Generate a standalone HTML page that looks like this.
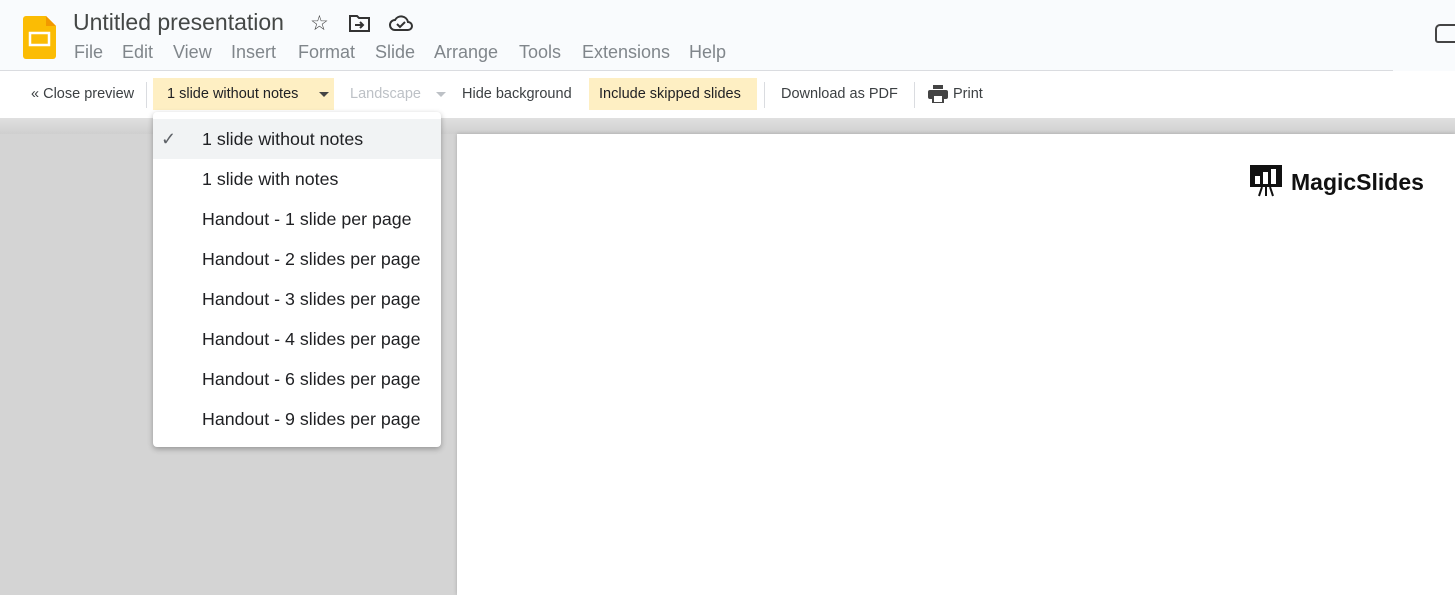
<!DOCTYPE html>
<html><head><style>
*{margin:0;padding:0;box-sizing:border-box}
body{width:1455px;height:595px;overflow:hidden;font-family:"Liberation Sans",Arial,sans-serif;background:#d4d4d4;position:relative}
.top{position:absolute;left:0;top:0;width:1455px;height:71px;background:#f9fbfd}
.line{position:absolute;left:0;top:70px;width:1393px;height:1px;background:#dadce0}
.tb{position:absolute;left:0;top:71px;width:1455px;height:47px;background:#fff}
.t{position:absolute;white-space:nowrap}
.m{position:absolute;top:42px;font-size:18px;color:#80868b;white-space:nowrap}
.btn{position:absolute;top:78px;height:32px;font-size:14.5px;color:#3c4043;line-height:32px;white-space:nowrap}
.sep{position:absolute;top:82px;width:1px;height:26px;background:#dadce0}
.dd{position:absolute;left:153px;top:112px;width:288px;height:335px;background:#fff;border-radius:4px;box-shadow:0 2px 6px rgba(0,0,0,.3)}
.it{position:absolute;left:0;width:288px;height:40px;line-height:40px;padding-left:49px;font-size:17.8px;color:#202124;white-space:nowrap}
.slide{position:absolute;left:457px;top:134px;width:998px;height:461px;background:#fff;box-shadow:0 0 4px rgba(0,0,0,.2)}
.shade{position:absolute;left:0;top:118px;width:1455px;height:16px;background:linear-gradient(#e0e0e0,#cfcfcf)}
</style></head><body>
<div class="top"></div><div class="line"></div>
<div class="tb"></div>
<svg style="position:absolute;left:23px;top:16px" width="33" height="43" viewBox="0 0 33 43"><path d="M3 0h20l10 10v30a3 3 0 0 1-3 3H3a3 3 0 0 1-3-3V3a3 3 0 0 1 3-3z" fill="#fbbc04"/><path d="M23 0l10 10h-10z" fill="#f29900"/><rect x="7" y="17" width="19" height="12" fill="none" stroke="#fff" stroke-width="2.5"/></svg>
<div class="t" style="left:73px;top:9px;font-size:23px;color:#444746">Untitled presentation</div>
<div class="t" style="left:310px;top:11px;font-size:21px;color:#444">☆</div>
<svg style="position:absolute;left:349px;top:15px" width="22" height="17" viewBox="0 0 22 17"><path d="M1 1h7l2 2h10v13H1z" fill="none" stroke="#333" stroke-width="2"/><path d="M6 10h8M11 7l3 3-3 3" fill="none" stroke="#333" stroke-width="2"/></svg>
<svg style="position:absolute;left:389px;top:15px" width="24" height="16" viewBox="0 0 24 16"><path d="M6 15a5 5 0 0 1 0-10 7 7 0 0 1 13 2 4 4 0 0 1 0 8z" fill="none" stroke="#333" stroke-width="2"/><path d="M8 9l3 3 5-5" fill="none" stroke="#333" stroke-width="2"/></svg>
<div class="m" style="left:74px">File</div>
<div class="m" style="left:122px">Edit</div>
<div class="m" style="left:173px">View</div>
<div class="m" style="left:231px">Insert</div>
<div class="m" style="left:298px">Format</div>
<div class="m" style="left:375px">Slide</div>
<div class="m" style="left:434px">Arrange</div>
<div class="m" style="left:519px">Tools</div>
<div class="m" style="left:582px">Extensions</div>
<div class="m" style="left:689px">Help</div>
<div style="position:absolute;left:1435px;top:24px;width:22px;height:19px;border:2px solid #444;border-radius:5px 0 0 3px"></div>
<div class="btn" style="left:31px">« Close preview</div>
<div class="sep" style="left:146px"></div>
<div class="btn" style="left:153px;width:181px;background:#feefc3;padding-left:14px;color:#202124">1 slide without notes<svg style="position:absolute;left:166px;top:14px" width="10" height="5"><path d="M0 0h10L5 5z" fill="#444"/></svg></div>
<div class="btn" style="left:350px;color:#bdc1c6">Landscape<svg style="position:absolute;left:86px;top:14px" width="10" height="5"><path d="M0 0h10L5 5z" fill="#bdc1c6"/></svg></div>
<div class="btn" style="left:462px">Hide background</div>
<div class="btn" style="left:589px;width:168px;background:#feefc3;padding-left:10px;color:#202124">Include skipped slides</div>
<div class="sep" style="left:764px"></div>
<div class="btn" style="left:781px">Download as PDF</div>
<div class="sep" style="left:914px"></div>
<svg style="position:absolute;left:928px;top:85px" width="20" height="18" viewBox="0 0 20 18"><rect x="5" y="0" width="10" height="4" fill="#444"/><rect x="0" y="5" width="20" height="9" rx="2" fill="#444"/><rect x="5" y="10" width="10" height="8" fill="#fff" stroke="#444" stroke-width="2"/></svg>
<div class="btn" style="left:953px">Print</div>
<div class="shade"></div>
<div class="slide">
<svg style="position:absolute;left:793px;top:31px" width="32" height="32" viewBox="0 0 32 32"><rect x="0" y="0" width="32" height="22" fill="#111"/><rect x="5" y="11" width="5" height="8" fill="#fff"/><rect x="13" y="7" width="5" height="12" fill="#fff"/><rect x="21" y="4" width="5" height="15" fill="#fff"/><path d="M12 22l-3 9M16 22v9M20 22l3 9" stroke="#111" stroke-width="2"/></svg>
<div class="t" style="left:834px;top:35px;font-size:23px;font-weight:bold;color:#111">MagicSlides</div>
</div>
<div class="dd">
<div class="it" style="top:7px;background:#f1f3f4"><span style="position:absolute;left:8px;color:#5f6368;font-size:18px">✓</span>1 slide without notes</div>
<div class="it" style="top:47px">1 slide with notes</div>
<div class="it" style="top:87px">Handout - 1 slide per page</div>
<div class="it" style="top:127px">Handout - 2 slides per page</div>
<div class="it" style="top:167px">Handout - 3 slides per page</div>
<div class="it" style="top:207px">Handout - 4 slides per page</div>
<div class="it" style="top:247px">Handout - 6 slides per page</div>
<div class="it" style="top:287px">Handout - 9 slides per page</div>
</div>
</body></html>
